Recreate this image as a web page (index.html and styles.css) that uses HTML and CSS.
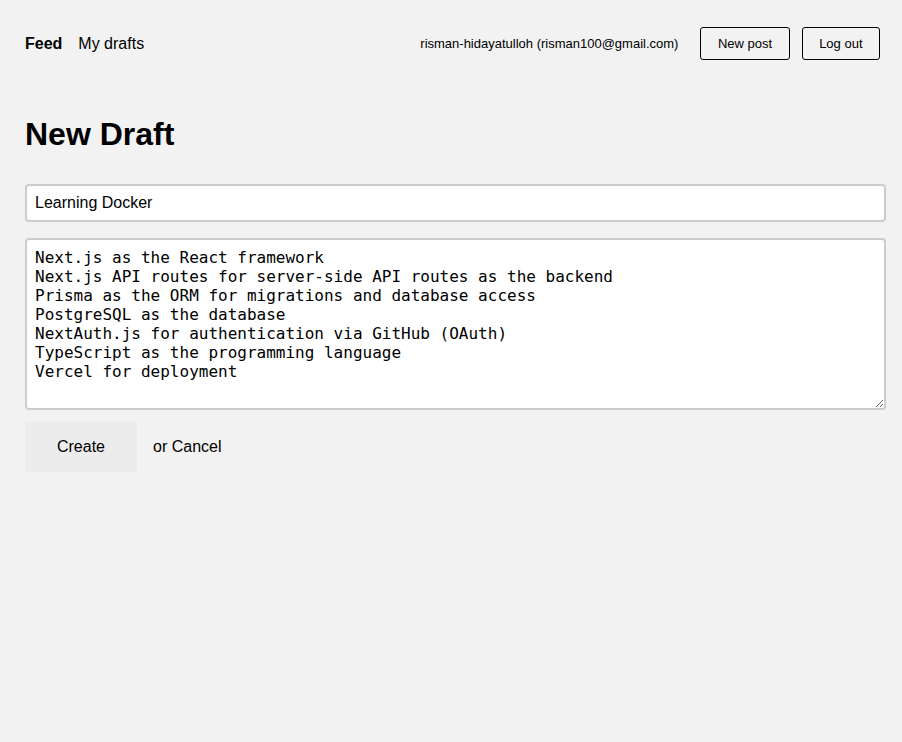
FILE: index.html
```html
<!DOCTYPE html>
<html>
<head>
<meta charset="utf-8">
<link rel="stylesheet" href="styles.css">
</head>
<body>
<nav class="nav">
  <div class="left">
    <a class="bold" href="#">Feed</a>
    <a href="#">My drafts</a>
  </div>
  <div class="right">
    <p class="user">risman-hidayatulloh (risman100@gmail.com)</p>
    <a class="btn" href="#">New post</a>
    <a class="btn" href="#">Log out</a>
  </div>
</nav>
<main class="page">
  <h1 class="title">New Draft</h1>
  <form class="form">
    <input class="field" type="text" value="Learning Docker">
    <textarea class="area">Next.js as the React framework
Next.js API routes for server-side API routes as the backend
Prisma as the ORM for migrations and database access
PostgreSQL as the database
NextAuth.js for authentication via GitHub (OAuth)
TypeScript as the programming language
Vercel for deployment</textarea>
    <div class="actions">
      <input class="submit" type="submit" value="Create">
      <a class="back" href="#">or Cancel</a>
    </div>
  </form>
</main>
</body>
</html>
```

FILE: styles.css
```css
html, body {
  margin: 0;
  padding: 0;
}
body {
  background: #f2f2f2;
  font-family: "Liberation Sans", Arial, sans-serif;
  font-size: 16px;
  color: #000;
}
a {
  color: #000;
  text-decoration: none;
}
.nav {
  display: flex;
  align-items: center;
  justify-content: space-between;
  padding: 27px 22px 0 25px;
  height: 33px;
}
.left {
  display: flex;
  align-items: center;
  gap: 16px;
}
.bold {
  font-weight: bold;
}
.right {
  display: flex;
  align-items: center;
}
.user {
  margin: 0 22px 0 0;
  font-size: 13px;
}
.btn {
  display: flex;
  align-items: center;
  box-sizing: border-box;
  height: 33px;
  padding: 0 16.5px;
  border: 1px solid #000;
  border-radius: 3px;
  font-size: 13px;
}
.btn + .btn {
  margin-left: 12px;
}
.page {
  padding: 0 16px 0 25px;
}
.title {
  margin: 56px 0 31px;
  font-size: 32px;
  font-weight: bold;
  line-height: 37px;
}
.form {
  display: flex;
  flex-direction: column;
  margin: 0;
}
.field, .area {
  box-sizing: border-box;
  width: 100%;
  margin: 0;
  padding: 8px;
  border: 2px solid rgba(0, 0, 0, 0.2);
  border-radius: 4px;
  background: #fff;
  color: #000;
}
.field {
  height: 38px;
  font-family: "Liberation Sans", Arial, sans-serif;
  font-size: 16px;
}
.area {
  margin-top: 16px;
  height: 172px;
  font-family: "DejaVu Sans Mono", monospace;
  font-size: 16px;
  line-height: 19px;
}
.actions {
  display: flex;
  align-items: center;
  margin-top: 12px;
}
.submit {
  width: 112px;
  height: 50px;
  border: 0;
  padding: 0;
  margin: 0;
  background: #ececec;
  color: #000;
  font-family: "Liberation Sans", Arial, sans-serif;
  font-size: 16px;
}
.back {
  margin-left: 16px;
}
```
